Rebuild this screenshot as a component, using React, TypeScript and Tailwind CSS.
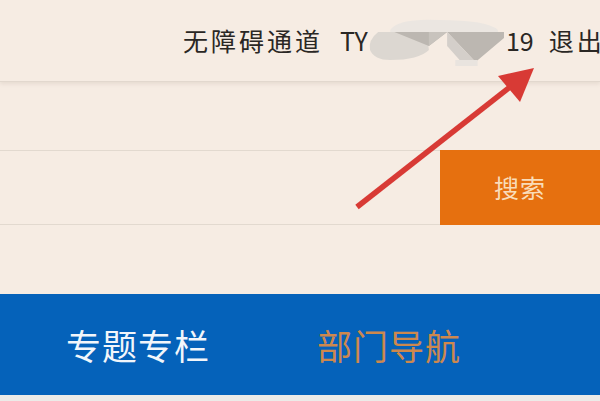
import React from "react";

export default function App() {
  return (
    <div
      className="relative w-[600px] h-[401px] overflow-hidden bg-[#f6ece3] flex flex-col"
      style={{ fontFamily: '"Noto Sans CJK SC", "Noto Sans", sans-serif' }}
    >
      {/* top bar */}
      <div className="h-[82px] shrink-0 flex items-center pl-[183px] whitespace-nowrap border-b border-[#e2d8ce] shadow-[0_2px_4px_rgba(120,100,80,0.12)] text-[#2a2724] text-[25px] leading-none">
        <span className="tracking-[3px]">无障碍通道</span>
        <span className="ml-[17px]">TY</span>
        <svg width="138" height="50" viewBox="0 0 136 50" preserveAspectRatio="none" className="shrink-0 -my-3">
          {/* light top blob */}
          <path d="M22 14 Q30 2 70 4 Q118 4 128 14 L128 16 L22 16 Z" fill="#ebe6e1" />
          {/* left round blob */}
          <path d="M10 16 Q0 24 2 34 Q6 44 22 44 Q50 44 60 34 L58 16 Z" fill="#dcd7d1" />
          {/* dark band + triangles */}
          <path d="M26 16 L134 16 L134 22 L106 46 L78 16 L60 30 Z" fill="#bcb7b1" />
          <path d="M60 16 L78 16 L60 30 Z" fill="#c8c3bd" />
          <path d="M78 16 L106 46 L92 46 L78 30 Z" fill="#d4cfca" />
          <path d="M86 44 L108 44 L108 50 L86 50 Z" fill="#e9e4df" />
        </svg>
        <span>19</span>
        <span className="ml-[15px] tracking-[3px]">退出</span>
      </div>

      <div className="h-[68px] shrink-0" />

      {/* search row */}
      <div className="h-[75px] shrink-0 flex">
        <div className="flex-1 border-y border-[#e2d9cf]" />
        <button className="w-[160px] bg-[#e6700f] text-[#f9dcb9] text-[25px] tracking-[1px] flex items-center justify-center">
          搜索
        </button>
      </div>

      <div className="h-[69px] shrink-0" />

      {/* nav */}
      <div className="h-[101px] shrink-0 bg-[#0562ba] flex items-center pl-[66px] text-[35px] leading-none tracking-[1px]">
        <span className="text-[#f2f6fb]">专题专栏</span>
        <span className="ml-[107px] text-[#cd884e]">部门导航</span>
      </div>

      <div className="flex-1 bg-[#ecebe8]" />

      {/* red arrow annotation */}
      <svg
        className="absolute left-0 top-0 pointer-events-none"
        width="600"
        height="401"
        viewBox="0 0 600 401"
      >
        <line x1="357" y1="207" x2="515" y2="83" stroke="#d83a35" strokeWidth="5.5" />
        <path d="M534 68 L498 76 L520 102 Z" fill="#d83a35" />
      </svg>
    </div>
  );
}
